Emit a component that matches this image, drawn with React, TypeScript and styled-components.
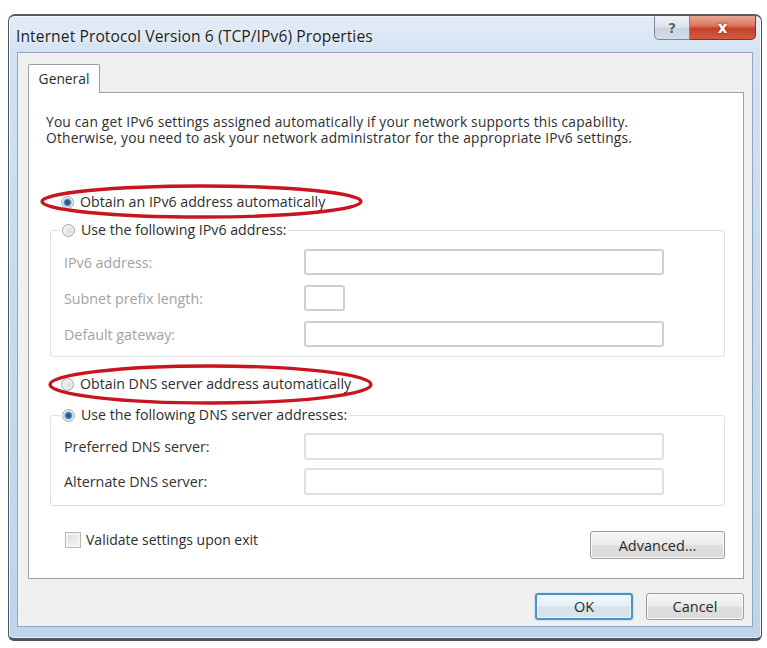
import React from 'react';
import styled, { createGlobalStyle } from 'styled-components';

const GlobalStyle = createGlobalStyle`
    html, body {
        margin: 0;
        padding: 0;
        background: #ffffff;
    }
    body {
        font-family: "Open Sans", "Noto Sans", "Liberation Sans", sans-serif;
        font-size: 13px;
        color: #2e2e2e;
    }
`

type Field = { label: string; width: number }

const ipv6Fields: Field[] = [
    { label: 'IPv6 address:', width: 360 },
    { label: 'Subnet prefix length:', width: 41 },
    { label: 'Default gateway:', width: 360 },
]

const dnsFields: Field[] = [
    { label: 'Preferred DNS server:', width: 360 },
    { label: 'Alternate DNS server:', width: 360 },
]

const Oval: React.FC<{ readonly left: number, readonly top: number, readonly w: number, readonly h: number }> = ({ left, top, w, h }) => (
    <Highlight $left={left} $top={top} width={w} height={h} viewBox={`0 0 ${w} ${h}`}>
        <ellipse cx={w / 2} cy={h / 2} rx={w / 2 - 2} ry={h / 2 - 2} fill="none" stroke="#c8151f" strokeWidth={3.4} />
    </Highlight>
)

const RadioOption: React.FC<{ readonly label: string, readonly checked?: boolean }> = ({ label, checked }) => (
    <OptionLabel>
        <Radio $checked={!!checked} />
        <span>{label}</span>
    </OptionLabel>
)

export default function App() {
    return <Screen>
        <GlobalStyle />
        <Window>
            <TitleBar>
                <Title>Internet Protocol Version 6 (TCP/IPv6) Properties</Title>
                <CaptionButtons>
                    <CaptionButton $variant="help">?</CaptionButton>
                    <CaptionButton $variant="close">x</CaptionButton>
                </CaptionButtons>
            </TitleBar>
            <Client>
                <TabStrip>
                    <Tab>General</Tab>
                </TabStrip>
                <Panel>
                    <Intro>
                        <IntroLine>You can get IPv6 settings assigned automatically if your network supports this capability.</IntroLine>
                        <IntroLine>Otherwise, you need to ask your network administrator for the appropriate IPv6 settings.</IntroLine>
                    </Intro>
                    <Section>
                        <RadioRow $gap={48}>
                            <RadioOption label="Obtain an IPv6 address automatically" checked />
                            <Oval left={-10} top={-10} w={323} h={35} />
                        </RadioRow>
                        <Group $gap={12} $padTop={11} $padBottom={9} $rowGap={10}>
                            <Legend>
                                <RadioOption label="Use the following IPv6 address:" />
                            </Legend>
                            {ipv6Fields.map(f => (
                                <FieldRow key={f.label} $height={26}>
                                    <FieldLabel $disabled>{f.label}</FieldLabel>
                                    <TextBox $width={f.width} $disabled />
                                </FieldRow>
                            ))}
                        </Group>
                        <RadioRow $gap={19}>
                            <RadioOption label="Obtain DNS server address automatically" />
                            <Oval left={-2} top={-12} w={325} h={41} />
                        </RadioRow>
                        <Group $gap={15} $padTop={10} $padBottom={10} $rowGap={8}>
                            <Legend>
                                <RadioOption label="Use the following DNS server addresses:" checked />
                            </Legend>
                            {dnsFields.map(f => (
                                <FieldRow key={f.label} $height={27}>
                                    <FieldLabel>{f.label}</FieldLabel>
                                    <TextBox $width={f.width} />
                                </FieldRow>
                            ))}
                        </Group>
                        <OptionsRow>
                            <CheckLabel>
                                <Checkbox />
                                <span>Validate settings upon exit</span>
                            </CheckLabel>
                            <PushButton $width={135} $height={28}>Advanced...</PushButton>
                        </OptionsRow>
                    </Section>
                </Panel>
                <DialogButtons>
                    <PushButton $width={98} $height={27} $default>OK</PushButton>
                    <PushButton $width={98} $height={27}>Cancel</PushButton>
                </DialogButtons>
            </Client>
        </Window>
    </Screen>
}

const Screen = styled.div`
    width: 767px;
    height: 648px;
    box-sizing: border-box;
    padding: 14px 0 0 8px;
    overflow: hidden;
`

const Window = styled.div`
    width: 754px;
    height: 627px;
    box-sizing: border-box;
    display: flex;
    flex-direction: column;
    border: 1px solid #4b5561;
    border-top: 2px solid #555e69;
    border-bottom: 3px solid #4d5560;
    border-radius: 7px 7px 6px 6px;
    background: linear-gradient(180deg, #e4edf7 0%, #d3e2f2 6%, #c8dbef 40%, #bfd4ec 100%);
    box-shadow: inset 0 0 0 1px rgba(255, 255, 255, 0.7);
`

const TitleBar = styled.div`
    height: 36px;
    display: flex;
    align-items: flex-start;
    flex-shrink: 0;
`

const Title = styled.div`
    margin: 11px 0 0 7px;
    font-size: 15.6px;
    letter-spacing: 0.1px;
    line-height: 19px;
    color: #1f1f1f;
    text-shadow: 0 0 6px rgba(255, 255, 255, 0.9);
`

const CaptionButtons = styled.div`
    margin-left: auto;
    margin-right: 5px;
    display: flex;
`

const CaptionButton = styled.div<{ $variant: 'help' | 'close' }>`
    height: 24px;
    box-sizing: border-box;
    display: flex;
    align-items: center;
    justify-content: center;
    font-family: "DejaVu Sans", sans-serif;
    font-weight: bold;
    width: ${p => p.$variant === 'close' ? 66 : 36}px;
    border: 1px solid ${p => p.$variant === 'close' ? '#7d3326' : '#7a8a9d'};
    border-top: none;
    border-radius: ${p => p.$variant === 'close' ? '0 0 5px 0' : '0 0 0 5px'};
    border-left-width: ${p => p.$variant === 'close' ? 0 : 1}px;
    font-size: ${p => p.$variant === 'close' ? 15 : 14}px;
    color: ${p => p.$variant === 'close' ? '#ffffff' : '#5b6570'};
    background: ${p => p.$variant === 'close'
        ? 'linear-gradient(180deg, #eaa796 0%, #dc7a63 40%, #c8412a 55%, #d25a40 100%)'
        : 'linear-gradient(180deg, #eef2f7 0%, #dde5ee 45%, #c9d4e0 55%, #d3dde8 100%)'};
    text-shadow: ${p => p.$variant === 'close' ? '0 0 3px #8a2a1a' : '0 0 2px #ffffff'};
`

const Client = styled.div`
    flex: 1;
    margin: 0 8px 11px 8px;
    box-sizing: border-box;
    display: flex;
    flex-direction: column;
    background: #f0f0f0;
    border: 1px solid #93a6bd;
    padding: 11px 8px 0 10px;
`

const TabStrip = styled.div`
    display: flex;
    position: relative;
    z-index: 1;
    margin-bottom: -1px;
`

const Tab = styled.div`
    width: 72px;
    height: 29px;
    box-sizing: border-box;
    border: 1px solid #9a9ea6;
    border-bottom: none;
    border-radius: 2px 2px 0 0;
    background: #ffffff;
    display: flex;
    align-items: center;
    justify-content: center;
    font-size: 13.8px;
    padding-bottom: 2px;
`

const Panel = styled.div`
    height: 487px;
    box-sizing: border-box;
    border: 1px solid #9a9ea6;
    background: #ffffff;
    display: flex;
    flex-direction: column;
`

const Intro = styled.div`
    margin: 21px 0 0 17px;
    display: flex;
    flex-direction: column;
`

const IntroLine = styled.span`
    height: 16px;
    line-height: 16px;
    font-size: 13.75px;
    letter-spacing: 0.2px;
    white-space: nowrap;
`

const Section = styled.div`
    margin-left: 21px;
    width: 675px;
    display: flex;
    flex-direction: column;
`

const RadioRow = styled.div<{ $gap: number }>`
    position: relative;
    margin-top: ${p => p.$gap}px;
    padding-left: 11px;
    height: 16px;
    display: flex;
    align-items: center;
`

const OptionLabel = styled.label`
    display: flex;
    align-items: center;
    gap: 6px;
    font-size: 14.2px;
    line-height: 16px;
    white-space: nowrap;
`

const Radio = styled.span<{ $checked: boolean }>`
    width: 13px;
    height: 13px;
    box-sizing: border-box;
    border-radius: 50%;
    border: 1px solid #a3a8ad;
    background: ${p => p.$checked
        ? 'radial-gradient(circle, #1d4f7e 0%, #2e6aa0 32%, #8fb5d6 48%, #eef2f5 62%, #ffffff 100%)'
        : 'radial-gradient(circle at 60% 60%, #d9dcdf 0%, #eceef0 50%, #fafafa 100%)'};
    flex-shrink: 0;
`

const Highlight = styled.svg<{ $left: number, $top: number }>`
    position: absolute;
    left: ${p => p.$left}px;
    top: ${p => p.$top}px;
    pointer-events: none;
    overflow: visible;
`

const Group = styled.fieldset<{ $gap: number, $padTop: number, $padBottom: number, $rowGap: number }>`
    margin: ${p => p.$gap}px 0 0 0;
    padding: ${p => p.$padTop}px 0 ${p => p.$padBottom}px 0;
    min-width: 0;
    border: 1px solid #dde1e4;
    border-radius: 3px;
    display: flex;
    flex-direction: column;
    gap: ${p => p.$rowGap}px;
`

const Legend = styled.legend`
    margin-left: 9px;
    padding: 0 2px;
    height: 16px;
`

const FieldRow = styled.div<{ $height: number }>`
    height: ${p => p.$height}px;
    display: flex;
    align-items: center;
    padding-left: 13px;
`

const FieldLabel = styled.span<{ $disabled?: boolean }>`
    width: 240px;
    font-size: 14.3px;
    color: ${p => p.$disabled ? '#a3a3a3' : '#333333'};
`

const TextBox = styled.div<{ $width: number, $disabled?: boolean }>`
    width: ${p => p.$width}px;
    height: 100%;
    box-sizing: border-box;
    border: 2px solid ${p => p.$disabled ? '#cfcfcf' : '#e0e0e0'};
    border-radius: 3px;
    background: #ffffff;
`

const OptionsRow = styled.div`
    margin-top: 25px;
    display: flex;
    align-items: flex-start;
    justify-content: space-between;
    padding-left: 15px;
`

const CheckLabel = styled.label`
    display: flex;
    align-items: center;
    gap: 5px;
    height: 17px;
    margin-top: 0;
    font-size: 14px;
`

const Checkbox = styled.span`
    width: 16px;
    height: 16px;
    box-sizing: border-box;
    border: 1px solid #b5b8bb;
    background: linear-gradient(135deg, #d6d8da 0%, #e9eaeb 50%, #f6f6f6 100%);
    box-shadow: inset 0 0 0 2px #f4f4f4;
`

const PushButton = styled.div<{ $width: number, $height: number, $default?: boolean }>`
    width: ${p => p.$width}px;
    height: ${p => p.$height}px;
    box-sizing: border-box;
    display: flex;
    align-items: center;
    justify-content: center;
    border-radius: 3px;
    font-size: 14.5px;
    color: #2a2a2a;
    border: ${p => p.$default ? '2px solid #4b93c2' : '1px solid #9c9c9c'};
    background: ${p => p.$default
        ? 'linear-gradient(180deg, #f2f8fc 0%, #e6eff6 48%, #d5e2ec 52%, #d8e4ee 100%)'
        : 'linear-gradient(180deg, #f6f6f6 0%, #ececec 48%, #dedede 52%, #dcdcdc 100%)'};
    box-shadow: ${p => p.$default ? '0 0 2px #8cc4e6, inset 0 0 0 1px #e8f4fb' : 'inset 0 0 0 1px #fbfbfb'};
`

const DialogButtons = styled.div`
    margin-top: 14px;
    display: flex;
    justify-content: flex-end;
    gap: 13px;
`
